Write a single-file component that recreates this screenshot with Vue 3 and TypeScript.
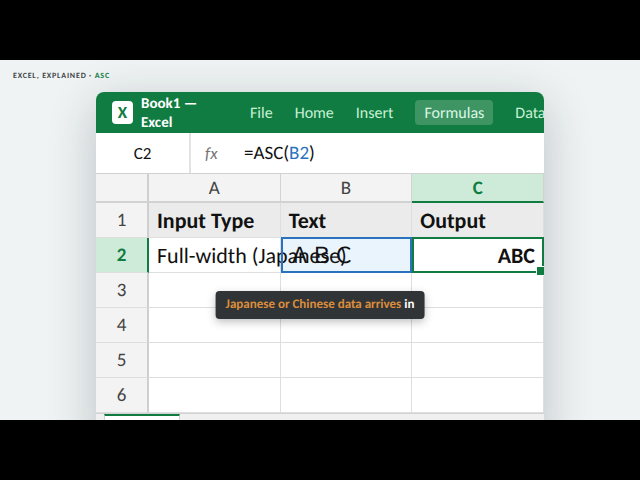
<script setup lang="ts">
import { ref } from 'vue'

interface Row {
  id: number
  input: string
  text: string
  output: string
}

const menus: string[] = ['File', 'Home', 'Insert', 'Formulas', 'Data']
const activeMenu = ref('Formulas')
const columns: string[] = ['A', 'B', 'C']
const rows: Row[] = [
  { id: 1, input: 'Input Type', text: 'Text', output: 'Output' },
  { id: 2, input: 'Full-width (Japanese)', text: 'ＡＢＣ', output: 'ABC' },
  { id: 3, input: '', text: '', output: '' },
  { id: 4, input: '', text: '', output: '' },
  { id: 5, input: '', text: '', output: '' },
  { id: 6, input: '', text: '', output: '' },
]
</script>

<template>
  <div class="frame">
    <main class="stage">
      <p class="series">EXCEL, EXPLAINED · <b>ASC</b></p>

      <section class="book">
        <header class="ribbon">
          <span class="logo">X</span>
          <h1 class="title">Book1 — Excel</h1>
          <nav class="menus">
            <button
              v-for="menu in menus"
              :key="menu"
              type="button"
              class="menu"
              :class="{ active: menu === activeMenu }"
              @click="activeMenu = menu"
            >{{ menu }}</button>
          </nav>
        </header>

        <div class="formula-bar">
          <span class="cell-name">C2</span>
          <span class="fx">fx</span>
          <span class="formula">=ASC(<span class="reference">B2</span>)</span>
        </div>

        <table class="grid">
          <thead>
            <tr>
              <th class="corner"></th>
              <th v-for="column in columns" :key="column" scope="col" :class="{ current: column === 'C' }">{{ column }}</th>
            </tr>
          </thead>
          <tbody>
            <tr v-for="row in rows" :key="row.id" :class="{ heading: row.id === 1, current: row.id === 2 }">
              <th scope="row">{{ row.id }}</th>
              <td>{{ row.input }}</td>
              <td :class="{ source: row.id === 2 }">{{ row.text }}</td>
              <td :class="{ result: row.id === 2 }">{{ row.output }}</td>
            </tr>
          </tbody>
        </table>

        <footer class="sheets"><span class="sheet"></span></footer>
      </section>

      <p class="caption"><em>Japanese or Chinese data arrives</em> in</p>
    </main>
  </div>
</template>

<style>
body {
  background: #000;
}
</style>

<style scoped>
.frame {
  box-sizing: border-box;
  height: 100vh;
  padding: 60px 0;
  background: #000;
  color: #111;
  font-family: Carlito, Lato, 'Noto Sans CJK JP', sans-serif;
  text-rendering: geometricPrecision;
}

.frame * {
  box-sizing: border-box;
}

.stage {
  position: relative;
  height: 100%;
  overflow: hidden;
  padding: 10px 15% 0;
  background: #eff3f4;
}

.series {
  position: absolute;
  top: 12px;
  left: 13px;
  margin: 0;
  color: #3f4648;
  font-size: 8px;
  font-weight: 700;
  line-height: 9px;
  letter-spacing: 0.1em;
}

.series b {
  color: #107c41;
}

.book {
  margin-top: 22px;
  overflow: hidden;
  border-radius: 8px 8px 0 0;
  background: #fff;
  box-shadow: 0 12px 48px rgba(20, 35, 40, 0.24);
}

.ribbon {
  display: flex;
  align-items: center;
  height: 41px;
  padding-left: 16px;
  background: #107c41;
}

.logo {
  flex: none;
  width: 21px;
  border-radius: 4px;
  background: #fff;
  color: #107c41;
  font-size: 17px;
  font-weight: 700;
  line-height: 23px;
  text-align: center;
}

.title {
  flex: none;
  width: 76px;
  margin: 0 0 0 8px;
  padding-top: 2px;
  color: #fff;
  font-size: 15px;
  font-weight: 700;
  line-height: 19px;
}

.menus {
  display: flex;
  flex: none;
  gap: 22px;
  margin-left: 33px;
}

.menu {
  padding: 2px 0 0;
  border: 0;
  border-radius: 4px;
  background: none;
  color: #c8f0d5;
  font-family: inherit;
  font-size: 16px;
  line-height: 23px;
  text-rendering: inherit;
}

.menu.active {
  padding: 2px 9px 0;
  background: #3f9464;
  color: #dcf8e5;
}

.formula-bar {
  display: flex;
  align-items: center;
  height: 41px;
  border-bottom: 1px solid #d2d2d2;
  font-size: 19px;
  line-height: 38px;
}

.cell-name,
.fx,
.formula {
  padding-top: 2px;
}

.cell-name {
  width: 95px;
  border-right: 2px solid #e2e2e2;
  font-size: 17px;
  text-align: center;
}

.fx {
  width: 53px;
  padding-left: 14px;
  color: #777;
  font-size: 17px;
  font-style: italic;
}

.reference {
  color: #2b72be;
}

.grid {
  width: 100%;
  isolation: isolate;
  table-layout: fixed;
  border-collapse: separate;
  border-spacing: 0;
}

.grid th {
  padding: 2px 0 0;
  border-right: 1px solid #d2d2d2;
  background: #f3f3f3;
  color: #444;
  font-weight: 400;
}

.grid thead th {
  height: 29px;
  border-bottom: 2px solid #d2d2d2;
  font-size: 19px;
  line-height: 25px;
}

.grid .corner {
  width: 53px;
}

.grid tbody th,
.grid td {
  height: 35px;
  border-bottom: 1px solid #dedede;
  line-height: 32px;
}

.grid tbody th,
.grid .corner {
  border-right: 2px solid #cfcfcf;
}

.grid tbody th {
  font-size: 19px;
}

.grid td {
  padding: 2px 8px 0;
  border-right: 1px solid #dedede;
  font-size: 22px;
  white-space: nowrap;
}

.grid thead .current,
.grid .current th {
  background: #cdebd8;
  color: #107c41;
  font-weight: 700;
}

.grid thead .current {
  border-bottom-color: #107c41;
}

.grid .current th {
  border-right-color: #107c41;
}

.heading td {
  background: #ebebeb;
  font-weight: 700;
}

.source,
.result {
  position: relative;
}

.source::before,
.result::before {
  position: absolute;
  inset: -1px -1px -1px 0;
  border: 2px solid #2b72be;
  content: '';
}

/* The fill sits behind the text that runs over from column A. */
.source::after {
  position: absolute;
  inset: 0;
  z-index: -1;
  background: #eaf4fd;
  content: '';
}

.grid .result {
  font-weight: 700;
  text-align: right;
}

.result::before {
  border-color: #107c41;
}

.result::after {
  position: absolute;
  right: -3px;
  bottom: -4px;
  width: 8px;
  height: 8px;
  border: 1px solid #fff;
  background: #107c41;
  content: '';
}

.sheets {
  height: 36px;
  padding-left: 8px;
  border-top: 1px solid #d2d2d2;
  background: #f0f0f0;
}

.sheet {
  display: block;
  width: 76px;
  height: 28px;
  border: 1px solid #d2d2d2;
  border-top: 2px solid #107c41;
  background: #fff;
}

.caption {
  position: absolute;
  top: 231px;
  left: 50%;
  margin: 0;
  padding: 0 10px;
  border-radius: 4px;
  background: #303437;
  box-shadow: 0 3px 8px rgba(0, 0, 0, 0.25);
  color: #fff;
  font-size: 13px;
  font-weight: 700;
  line-height: 28px;
  white-space: nowrap;
  transform: translateX(-50%);
}

.caption em {
  color: #dc8d3c;
  font-style: normal;
}
</style>
